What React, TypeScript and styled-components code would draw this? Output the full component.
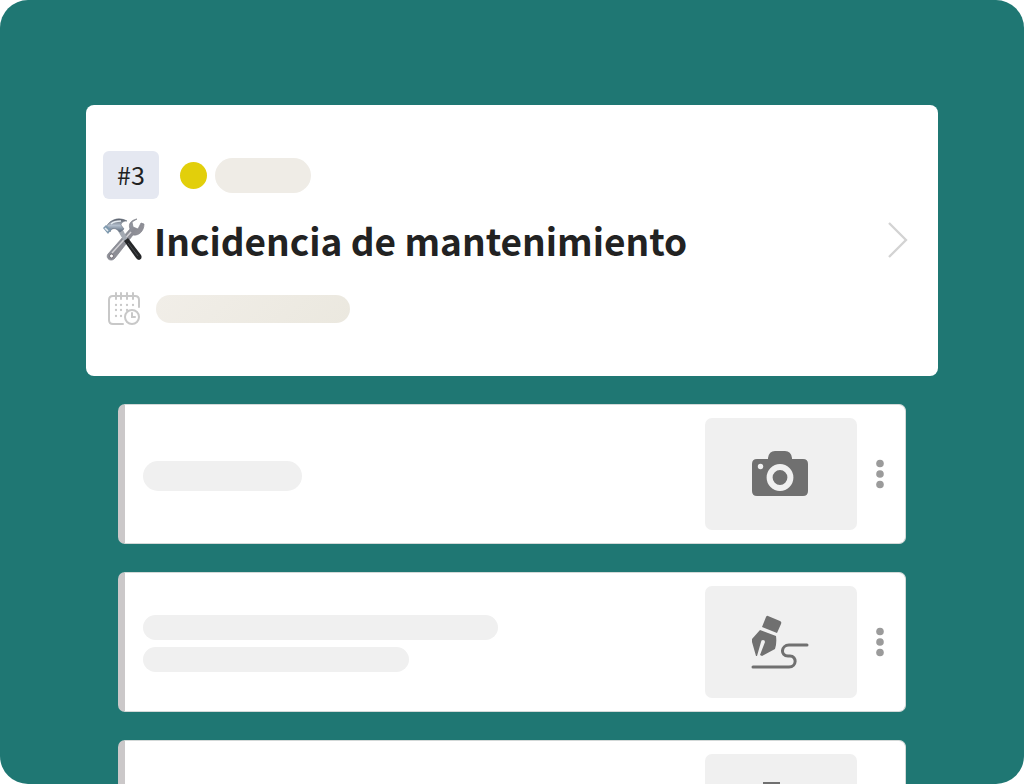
import React from "react";
import styled, { createGlobalStyle } from "styled-components";

const GlobalStyle = createGlobalStyle`
  *, *::before, *::after { box-sizing: border-box; }
  body { margin: 0; background: #fff; color: #222; font-family: "Noto Sans CJK SC", "Noto Sans", sans-serif; }
  button { font: inherit; border: 0; padding: 0; cursor: pointer; }
`;

const Stage = styled.main`
  height: 100vh;
  overflow: hidden;
  padding: 105px 86px 0;
  border-radius: 28px;
  background: #1f7773;
`;

const IssueCard = styled.section`
  display: flex;
  align-items: center;
  justify-content: space-between;
  padding: 46px 29px 50px 17px;
  border-radius: 8px;
  background: #fff;
`;

const IssueBody = styled.div`
  display: flex;
  flex-direction: column;
`;

const MetaRow = styled.div`
  display: flex;
  align-items: center;
`;

const Tag = styled.span`
  width: 56px;
  height: 48px;
  margin-right: 21px;
  border-radius: 6px;
  background: #e5e8f1;
  font-size: 25px;
  line-height: 46px;
  text-align: center;
`;

const StatusDot = styled.span`
  width: 27px;
  height: 27px;
  margin-right: 8px;
  border-radius: 50%;
  background: #e2cf0b;
`;

const Pill = styled.span<{ $width: number; $height: number; $fill?: string }>`
  display: block;
  width: ${(p) => p.$width}px;
  max-width: 100%;
  height: ${(p) => p.$height}px;
  border-radius: 20px;
  background: ${(p) => p.$fill ?? "#f0f0f0"};
`;

const TitleRow = styled.div`
  display: flex;
  align-items: center;
  gap: 9px;
  margin: 15px 0 26px;
`;

const Title = styled.h1`
  margin: 0;
  font-size: 37px;
  line-height: 52px;
  font-weight: 700;
  white-space: nowrap;
`;

const DateRow = styled.div`
  display: flex;
  align-items: center;
  gap: 15px;
  padding-left: 4px;
`;

const IconButton = styled.button`
  display: flex;
  align-items: center;
  justify-content: center;
  background: transparent;
`;

const TaskList = styled.ul`
  display: flex;
  flex-direction: column;
  gap: 28px;
  margin: 28px 0 0;
  padding: 0 32px;
  list-style: none;
`;

const Task = styled.li`
  display: flex;
  align-items: center;
  height: 140px;
  padding-right: 11px;
  border: 1px solid #d3d9d8;
  border-left: 7px solid #cbc8c9;
  border-radius: 7px;
  background: #fff;
`;

const TaskText = styled.div`
  display: flex;
  flex: 1;
  flex-direction: column;
  gap: 7px;
  padding: 3px 0 0 18px;
`;

const Attachment = styled.button`
  display: flex;
  align-items: center;
  justify-content: center;
  width: 152px;
  height: 112px;
  margin-right: 9px;
  padding-right: 2px;
  border-radius: 7px;
  background: #f0f0f0;
`;

const MenuButton = styled(IconButton)`
  width: 28px;
  height: 40px;
`;

const ToolsIcon = () => (
  <svg width="42" height="44" viewBox="0 0 42 44" aria-hidden="true">
    <defs>
      <linearGradient id="steel" x1="0" y1="0" x2="1" y2="1">
        <stop offset="0" stopColor="#a9b4c2" />
        <stop offset="0.5" stopColor="#8b8c94" />
        <stop offset="1" stopColor="#aaa4a8" />
      </linearGradient>
      <linearGradient id="head" x1="0" y1="0" x2="0" y2="1">
        <stop offset="0" stopColor="#565c66" />
        <stop offset="0.5" stopColor="#b3bfcd" />
        <stop offset="1" stopColor="#59687a" />
      </linearGradient>
    </defs>
    <path d="M34 1c-6 1-9 5-7 10L5 36c-3 4 3 9 7 4l18-23c6 1 11-4 11-11l-3-1-3 6-5-2-1-5Z" fill="url(#steel)" stroke="#80818a" strokeWidth=".7" />
    <path d="M28 14 9 35" stroke="#d3d2d5" strokeWidth="1.5" />
    <circle cx="8.500" cy="38" r="2" fill="#fff" stroke="#77727a" />
    <path d="m15 13 4-3 6 12-3 3Z" fill="#a3a9b2" />
    <path d="M21 23 25 20 38 37c2 4-2 7-5 3Z" fill="#252628" />
    <path d="m25 25 10 13" stroke="#4c4e53" strokeWidth="1" />
    <path d="M5 6C9 1 17-1 24 3c-4 0-6 2-6 4l3 4-4 3-4-3c-3-1-5 0-6 3l-4-5Z" fill="url(#head)" stroke="#68717d" strokeWidth=".6" />
    <path d="m0 10 3-3 5 5-3 4Z" fill="#7d98ad" />
    <path d="m2 10 3 3M8 6c3-3 6-3 10-3" stroke="#e3eaf0" strokeWidth="1.600" fill="none" />
  </svg>
);

const CalendarIcon = () => (
  <svg width="34" height="34" viewBox="0 0 34 34" fill="none" stroke="#c8c8c8" strokeWidth="2" strokeLinecap="round" aria-hidden="true">
    <path d="M16 32H6q-4 0-4-4V8q0-4 4-4h22q4 0 4 4v7M9 1v6M14 1v6M20 1v6M26 1v6" />
    <circle cx="25" cy="25" r="7" />
    <path d="M25 21v4h3" />
    <path d="M9 13h.01M14 13h.01M20 13h.01M26 13h.01M9 18h.01M14 18h.01M20 18h.01M9 24h.01M14 24h.01" strokeWidth="2.300" />
  </svg>
);

const CameraIcon = () => (
  <svg width="58" height="48" viewBox="0 0 58 48" aria-hidden="true">
    <path d="M6 9H17V8q1-7 7-7h10q6 0 7 7v1h11q5 0 5 5v27q0 5-5 5H6q-5 0-5-5V14q0-5 5-5Z" fill="#707070" />
    <circle cx="9.500" cy="16.500" r="2.700" fill="#f0f0f0" />
    <circle cx="29" cy="27.500" r="10.400" fill="none" stroke="#f0f0f0" strokeWidth="6" />
  </svg>
);

const SignatureIcon = () => (
  <svg width="58" height="54" viewBox="0 0 58 54" aria-hidden="true">
    <path d="M17 1 29 6q2 1 1 3l-4 9L11 12l4-10q1-2 2-1ZM9 15l16 6q1 7-1 13L11 41l-2-1 5-13q0-2-2-2t-2 2L6 41H5L1 27v-3Z" fill="#707070" />
    <path d="M2 52H38c8 0 8-11 1-11h-2c-8 0-7-11 1-11h18" fill="none" stroke="#707070" strokeWidth="3" strokeLinecap="round" />
  </svg>
);

const TimerIcon = () => (
  <svg width="40" height="56" viewBox="0 0 40 56" aria-hidden="true">
    <path d="M3 0h17v5h-5v5H8V5H3Z" fill="#707070" />
    <circle cx="12" cy="32" r="10" fill="none" stroke="#707070" strokeWidth="4" />
  </svg>
);

const ChevronIcon = () => (
  <svg width="22" height="38" viewBox="0 0 22 38" fill="none" aria-hidden="true">
    <path d="M2 3 19 20 2 37" stroke="#d3d3d3" strokeWidth="2.300" />
  </svg>
);

const DotsIcon = () => (
  <svg width="8" height="30" viewBox="0 0 8 30" fill="#9b9b9b" aria-hidden="true">
    <circle cx="4" cy="4.500" r="3.800" />
    <circle cx="4" cy="15" r="3.800" />
    <circle cx="4" cy="25.500" r="3.800" />
  </svg>
);

type TaskData = { lines: number[]; thickness: number; label: string; icon: React.ReactNode };

const tasks: TaskData[] = [
  { lines: [159], thickness: 30, label: "Cámara", icon: <CameraIcon /> },
  { lines: [355, 266], thickness: 25, label: "Firma", icon: <SignatureIcon /> },
  { lines: [159], thickness: 30, label: "Tiempo", icon: <TimerIcon /> },
];

export default function App() {
  return (
    <>
      <GlobalStyle />
      <Stage>
        <IssueCard>
          <IssueBody>
            <MetaRow>
              <Tag>#3</Tag>
              <StatusDot />
              <Pill $width={96} $height={35} $fill="#efece6" />
            </MetaRow>
            <TitleRow>
              <ToolsIcon />
              <Title>Incidencia de mantenimiento</Title>
            </TitleRow>
            <DateRow>
              <CalendarIcon />
              <Pill $width={194} $height={28} $fill="linear-gradient(135deg, #f1eee8, #ebe8df)" />
            </DateRow>
          </IssueBody>
          <IconButton aria-label="Abrir incidencia">
            <ChevronIcon />
          </IconButton>
        </IssueCard>
        <TaskList>
          {tasks.map((task, i) => (
            <Task key={i}>
              <TaskText>
                {task.lines.map((width) => (
                  <Pill key={width} $width={width} $height={task.thickness} />
                ))}
              </TaskText>
              <Attachment aria-label={task.label}>{task.icon}</Attachment>
              <MenuButton aria-label="Más opciones">
                <DotsIcon />
              </MenuButton>
            </Task>
          ))}
        </TaskList>
      </Stage>
    </>
  );
}
